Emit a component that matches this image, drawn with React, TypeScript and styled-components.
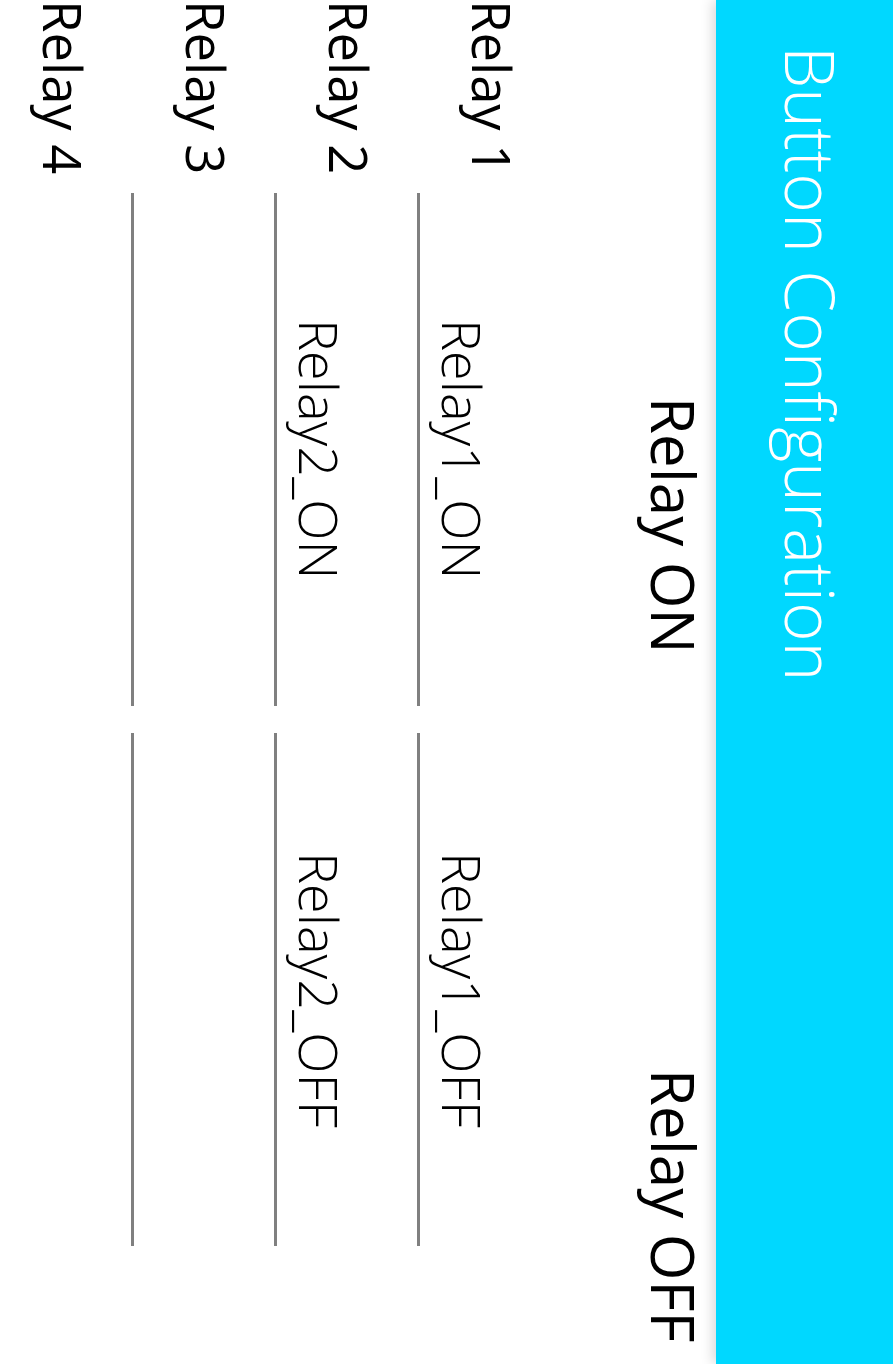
import React from "react";
import styled, { createGlobalStyle } from "styled-components";

const Global = createGlobalStyle`
  html, body { margin: 0; padding: 0; background: #ffffff; }
  body { width: 893px; height: 1364px; overflow: hidden; }
  #root { width: 893px; height: 1364px; }
`;

const Screen = styled.div`
  writing-mode: vertical-rl;
  width: 893px;
  height: 1364px;
  overflow: hidden;
  background: #ffffff;
  font-family: "Open Sans", "Noto Sans", sans-serif;
  color: #000000;
`;

const AppBar = styled.header`
  position: relative;
  z-index: 1;
  block-size: 177px;
  inline-size: 100%;
  box-sizing: border-box;
  padding-inline-start: 46px;
  padding-block-end: 12px;
  display: flex;
  align-items: center;
  background: #00d8ff;
  box-shadow: -3px 0 12px rgba(0, 0, 0, 0.16);
`;

const Title = styled.h1`
  margin: 0;
  font-size: 67.5px;
  font-weight: 300;
  line-height: 1;
  color: #ffffff;
`;

const Content = styled.main`
  padding-block-start: 12px;
`;

const ColumnHeads = styled.div`
  display: flex;
  padding-inline-start: 397px;
  margin-block-end: 126px;
`;

const ColumnHead = styled.div<{ $span?: number }>`
  inline-size: ${(p) => (p.$span ? `${p.$span}px` : "auto")};
  font-size: 60px;
  font-weight: 400;
  line-height: 1;
`;

const Row = styled.div`
  display: grid;
  grid-template-columns: 166px 513px 513px;
  column-gap: 27px;
  align-items: start;
  block-size: 143px;
`;

const RowLabel = styled.div`
  font-size: 52.5px;
  font-weight: 400;
  line-height: 1;
  white-space: nowrap;
`;

const Field = styled.div`
  margin-block-start: 28px;
  padding-block-end: 16px;
  border-block-end: 3px solid #808080;
  min-block-size: 54px;
  text-align: center;
  font-size: 54px;
  font-weight: 300;
  line-height: 1;
`;

const relays = [
  { name: "Relay 1", on: "Relay1_ON", off: "Relay1_OFF" },
  { name: "Relay 2", on: "Relay2_ON", off: "Relay2_OFF" },
  { name: "Relay 3", on: "", off: "" },
  { name: "Relay 4", on: "", off: "" },
];

export default function App() {
  return (
    <>
      <Global />
      <Screen>
        <AppBar>
          <Title>Button Configuration</Title>
        </AppBar>
        <Content>
          <ColumnHeads>
            <ColumnHead $span={672}>Relay ON</ColumnHead>
            <ColumnHead>Relay OFF</ColumnHead>
          </ColumnHeads>
          {relays.map((r) => (
            <Row key={r.name}>
              <RowLabel>{r.name}</RowLabel>
              <Field>{r.on}</Field>
              <Field>{r.off}</Field>
            </Row>
          ))}
        </Content>
      </Screen>
    </>
  );
}
